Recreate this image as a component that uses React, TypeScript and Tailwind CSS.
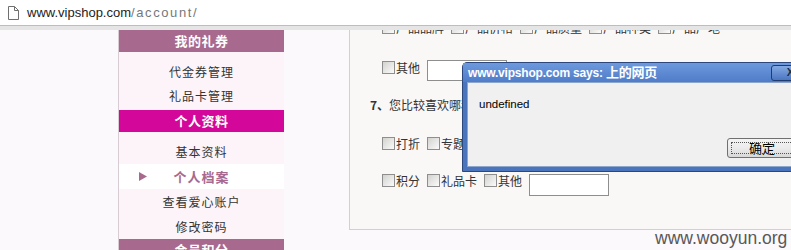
import React from "react";

function Cb() {
  return (
    <span className="inline-block w-[13px] h-[13px] shrink-0 border border-[#8e8e8e] bg-linear-to-br from-[#d2d2ce] to-[#fbfbfb]" />
  );
}

function Opt({ label, last }: { label: string; last?: boolean }) {
  return (
    <span className={"flex items-start gap-[1px] " + (last ? "" : "mr-[7px]")}>
      <Cb />
      <span className="text-[12px] leading-[13px] text-[#333]">{label}</span>
    </span>
  );
}

function SideHeader({ label, magenta }: { label: string; magenta?: boolean }) {
  return (
    <div
      className={
        "h-[22px] shrink-0 flex items-center justify-center text-white font-bold text-[13px] tracking-[0.5px] " +
        (magenta ? "bg-[#d3079a]" : "bg-[#a8698f]")
      }
    >
      {label}
    </div>
  );
}

function SideItem({ label, h, active }: { label: string; h: string; active?: boolean }) {
  return (
    <div
      className={
        "relative shrink-0 flex items-center justify-center tracking-[1px] " +
        h +
        (active ? " bg-white text-[#a8698f] font-bold text-[13px]" : " text-[#333] text-[12px]")
      }
    >
      {active && (
        <svg className="absolute left-[20px] top-[8px]" width="8" height="9" viewBox="0 0 8 9">
          <path d="M0 0 L8 4.5 L0 9 Z" fill="#a8698f" />
        </svg>
      )}
      {label}
    </div>
  );
}

export default function App() {
  return (
    <div className="relative w-[791px] h-[250px] overflow-hidden bg-[#fcf9fc] font-['Noto_Sans_CJK_SC',sans-serif]">
      {/* address bar */}
      <div className="h-[26px] bg-white border-b border-[#bdbdbd] flex items-center">
        <svg className="ml-[8px]" width="11" height="14" viewBox="0 0 11 14">
          <path d="M0.5 0.5 H6.5 L10.5 4.5 V13.5 H0.5 Z" fill="white" stroke="#6f6f6f" />
          <path d="M6.5 0.5 V4.5 H10.5" fill="none" stroke="#6f6f6f" />
        </svg>
        <span className="ml-[8px] text-[13px] font-['Liberation_Sans',sans-serif] text-[#222]">
          www.vipshop.com<span className="text-[#777] tracking-[1.6px]">/account/</span>
        </span>
      </div>
      <div className="h-[4px] bg-[#e5e5e5]" />

      {/* main */}
      <div className="flex h-[220px] overflow-hidden">
        <div className="w-[118px] shrink-0" />
        <div className="w-[166px] shrink-0 border-l border-[#d8ccd4] bg-[#fcf4f9] flex flex-col">
          <SideHeader label="我的礼券" />
          <div className="shrink-0 pt-[8px] pb-[2px]">
            <SideItem label="代金券管理" h="h-[24px]" />
            <SideItem label="礼品卡管理" h="h-[24px]" />
          </div>
          <SideHeader label="个人资料" magenta />
          <div className="shrink-0 pt-[7px]">
            <SideItem label="基本资料" h="h-[25px]" />
            <SideItem label="个人档案" h="h-[25px]" active />
            <SideItem label="查看爱心账户" h="h-[25px]" />
            <SideItem label="修改密码" h="h-[25px]" />
          </div>
          <SideHeader label="会员积分" />
        </div>
        <div className="w-[65px] shrink-0" />
        <div className="flex-1 h-[200px] border-l border-b border-[#d4cfd0] bg-[#faf8f7] overflow-hidden">
          <div className="-mt-[9px] h-[13px] flex items-start pl-[32px]">
            <Opt label="产品品牌" />
            <Opt label="产品价格" />
            <Opt label="产品质量" />
            <Opt label="产品种类" />
            <Opt label="产品产地" />
          </div>
          <div className="mt-[26px] h-[21px] flex items-start pl-[32px]">
            <span className="mt-[1px]">
              <Opt label="其他" />
            </span>
            <span className="w-[80px] h-[21px] border border-[#8e8e8e] bg-white" />
          </div>
          <div className="mt-[17px] h-[13px] flex items-center pl-[20px] text-[12px] leading-[13px] text-[#333]">
            <span className="font-bold">7、</span>
            <span>您比较喜欢哪种促销方式？</span>
          </div>
          <div className="mt-[26px] h-[13px] flex items-start pl-[32px]">
            <Opt label="打折" />
            <Opt label="专题活动" />
            <Opt label="限时抢购" />
          </div>
          <div className="mt-[24px] h-[21px] flex items-start pl-[32px]">
            <Opt label="积分" />
            <Opt label="礼品卡" />
            <Opt label="其他" />
            <span className="w-[80px] h-[22px] border border-[#8e8e8e] bg-white" />
          </div>
        </div>
      </div>

      {/* alert dialog */}
      <div className="absolute left-[462px] top-[62px] w-[360px] h-[110px] bg-[#4a74bb] border border-[#2b477c] rounded-tl-[5px] flex flex-col px-[4px] pb-[4px]">
        <div className="-mx-[4px] h-[19px] shrink-0 bg-linear-to-b from-[#6d99de] to-[#4f7cc7] flex items-center pl-[5px]">
          <span className="text-white font-bold text-[12px] font-['Liberation_Sans','Noto_Sans_CJK_SC',sans-serif] tracking-[-0.2px]">
            www.vipshop.com says: <span className="text-[13px]">上的网页</span>
          </span>
          <span className="ml-auto mr-[11px] w-[39px] h-[16px] rounded-[3px] border border-[#1f3b6f] bg-linear-to-b from-[#84a9e4] to-[#4b77c1] flex items-center justify-center text-[11px] font-bold text-[#1b2a48] font-['Liberation_Sans',sans-serif]">
            X
          </span>
        </div>
        <div className="h-[85px] shrink-0 bg-[#f0f0f0] border border-[#8fa6cc] flex flex-col pl-[11px] pt-[15px]">
          <span className="text-[11.5px] leading-[12px] text-black font-['Liberation_Sans',sans-serif]">undefined</span>
          <span className="relative mt-[28px] ml-[248px] w-[70px] h-[20px] rounded-[3px] border border-[#707070] bg-linear-to-b from-[#f4f4f4] via-[#ebebeb] to-[#d8d8d8] flex items-center justify-center text-[13px] text-black">
            <span className="absolute inset-[3px] border border-dotted border-[#555]" />
            确定
          </span>
        </div>
      </div>

      {/* watermark */}
      <div className="absolute left-[655px] top-[228px] text-[17.5px] leading-[20px] text-[#585858] font-['Liberation_Sans',sans-serif]">
        www.wooyun.org
      </div>
    </div>
  );
}
